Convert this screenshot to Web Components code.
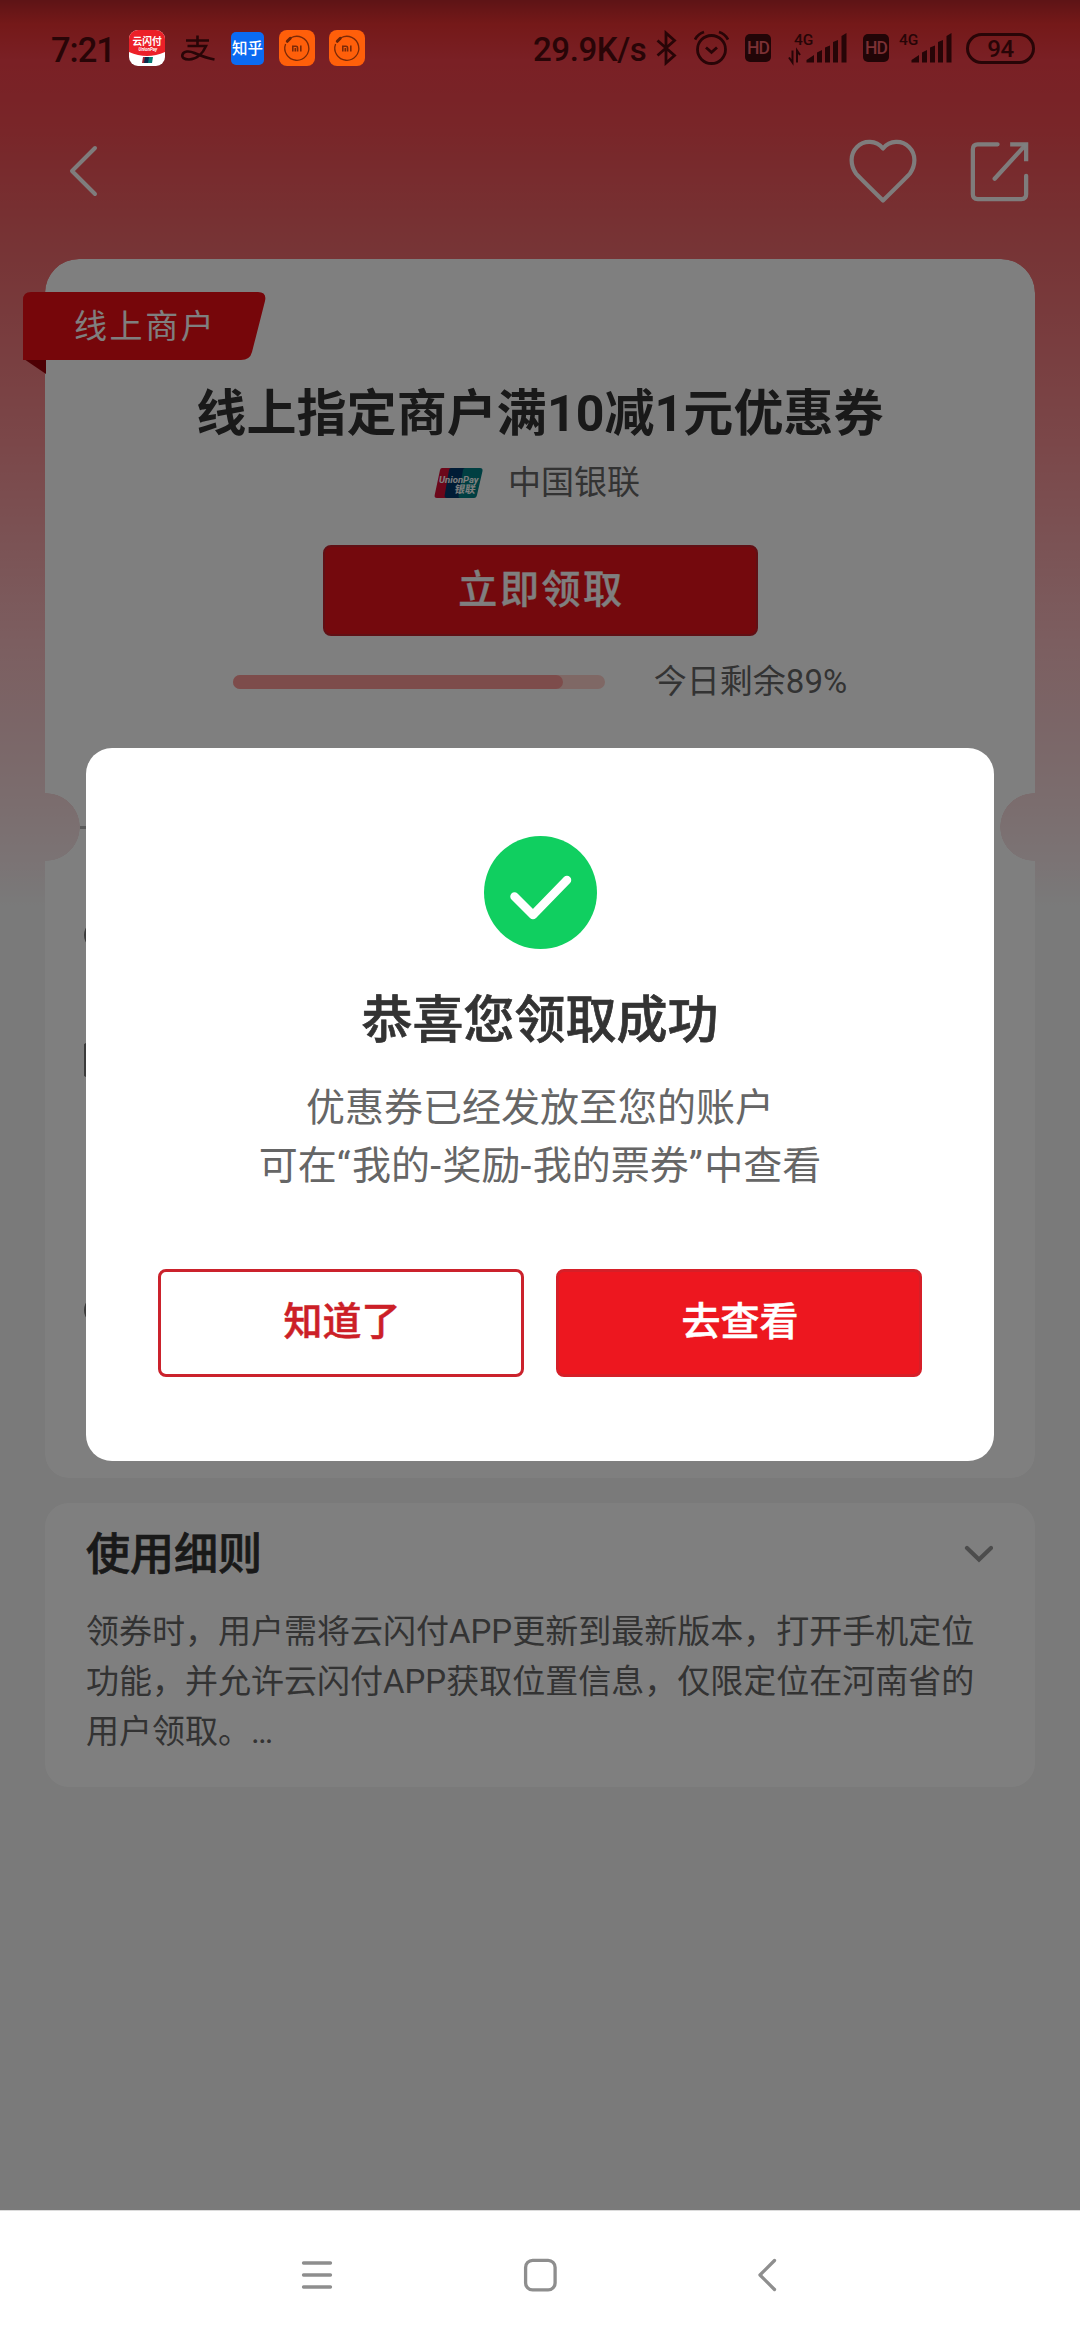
<!DOCTYPE html>
<html lang="zh-CN">
<head>
<meta charset="utf-8">
<title>优惠券</title>
<style>
html,body{margin:0;padding:0}
body{width:1080px;height:2340px;overflow:hidden;font-family:Roboto,"Noto Sans CJK SC",sans-serif;background:#fff}
</style>
</head>
<body>
<coupon-screen></coupon-screen>
<script>
function define(name, html){
  const t=document.createElement('template');
  t.innerHTML='<style>*{box-sizing:border-box}svg{display:block;flex:none}</style>'+html;
  customElements.define(name, class extends HTMLElement{
    constructor(){super();this.attachShadow({mode:'open'}).append(t.content.cloneNode(true));}
  });
}

define('mi-icon',`<style>:host{display:block;width:36px;height:36px}</style>
<svg width="36" height="36" viewBox="0 0 36 36"><rect width="36" height="36" rx="8" fill="#ff5f0a"/>
<path d="M12 7.8A12 12 0 1 1 6.6 14" fill="none" stroke="#7c2a08" stroke-width="1.3"/><path d="M8.300 11.300l3-3" stroke="#6b2408" stroke-width="3" stroke-linecap="round"/>
<path d="M13.800 21.500v-5.300h3.200q1.600 0 1.600 1.600v3.700M16.300 18v3.500M21.800 15.500v6" fill="none" stroke="#7c2a08" stroke-width="1.600"/></svg>`);

define('hd-badge',`<style>:host{display:flex;align-items:center;justify-content:center;width:26px;height:28px;border-radius:5px;background:#210507;color:#7c3034;font:500 17.500px/28px Roboto,sans-serif;letter-spacing:-1px}</style>HD`);

define('signal-meter',`<style>:host{display:block;width:60px;height:36px}svg{overflow:visible}</style>
<svg width="60" height="36" viewBox="0 0 60 36" fill="#260507">
<text x="6" y="14.500" font-family="Roboto" font-size="15.500" font-weight="500">4G</text>
<path d="M18.500 32.500v-2.500l7.500-5v7.500zM29 22.500l5-2.500v12.500h-5zM37 17.500l5-2v17h-5zM45 12l5-2v22.500h-5zM53.500 6l5-3v29.500h-5z"/>
<path class="a" d="M4.500 20.500v12L1 27.500M9 32.500v-12l3 4.500" fill="none" stroke="#260507" stroke-width="2"/></svg>`);

define('status-bar',`<style>:host{display:flex;align-items:center;height:96px;padding:0 45px 0 51px;color:#280507}
.time{font:500 34.500px/52px Roboto;letter-spacing:-1px;width:78px;white-space:nowrap;padding-top:3px}
.speed{font:500 33px/52px Roboto;letter-spacing:-.4px;width:123px;white-space:nowrap;margin-left:auto;padding-top:3px}
mi-icon+mi-icon{margin-left:14px}
.bt{margin-right:17px}.alarm{margin-right:16px}
.g1{margin:0 15px 0 17px}.g2{margin:0 13px 0 4px}
.bat{width:69px;height:31px;border:3px solid #280507;border-radius:16px;font:500 24px/26px Roboto;text-align:center;letter-spacing:-.5px}
</style>
<span class="time">7:21</span>
<svg width="36" height="36" viewBox="0 0 36 36"><defs><clipPath id="c"><rect width="36" height="36" rx="9"/></clipPath></defs><g clip-path="url(#c)"><rect width="36" height="36" fill="#fff"/><path d="M0 0h36v22q-18 8-36 0z" fill="#ec2028"/><text x="3.500" y="15" font-size="9.800" font-weight="700" fill="#fff" font-family="Noto Sans CJK SC">云闪付</text><text x="9.500" y="21" font-size="4.500" font-weight="700" font-style="italic" fill="#fff" font-family="Roboto">UnionPay</text><path d="M14 27h5l-1 6h-5z" fill="#a02333"/><path d="M16 27h5l-1 6h-5z" fill="#0b2b4d"/><path d="M20 27h4l-1 6h-4z" fill="#067a73"/></g></svg>
<svg style="margin:0 15px 0 15px" width="36" height="36" viewBox="0 0 36 36" fill="none" stroke="#280507" stroke-width="2.600"><path d="M6 10.500h23M17.500 5.500v10M7.500 16h18.500c-3 7-9 13.500-17 13.500-5 0-7.500-2-6.500-5 1.200-3.500 6.500-4 12-1.500 7 3 12 5 20 6.500"/></svg>
<svg width="33" height="33" viewBox="0 0 33 33"><rect width="33" height="33" rx="5" fill="#0b6bf2"/><text x="1" y="21.500" font-size="15.500" font-weight="500" fill="#fff" font-family="Noto Sans CJK SC">知乎</text></svg>
<mi-icon style="margin-left:15px"></mi-icon><mi-icon></mi-icon>
<span class="speed">29.9K/s</span>
<svg class="bt" width="21" height="36" viewBox="0 0 21 36" fill="none" stroke="#280507" stroke-width="2.800"><path d="M1.500 10.500l17 15L10 33V3l8.500 7.500-17 15"/></svg>
<svg class="alarm" width="35" height="36" viewBox="0 0 35 36" fill="none" stroke="#280507" stroke-width="2.800"><circle cx="17.500" cy="19.500" r="14"/><path d="M1 9.500Q4 4 10 2M34 9.500Q31 4 25 2M12 17.500l5.500 4.800 5.500-4.800"/></svg>
<hd-badge></hd-badge>
<signal-meter class="g1"></signal-meter>
<hd-badge></hd-badge>
<signal-meter class="g2" id="second"></signal-meter>
<div class="bat">94</div>`);

define('top-bar',`<style>:host{display:flex;align-items:center;height:150px;padding:0 50px 0 68px}.gap{flex:1}svg{fill:none;stroke:#fff;stroke-opacity:.96}</style>
<svg width="32" height="56" viewBox="0 0 32 56" stroke-width="4" stroke-linecap="round" stroke-linejoin="round"><path d="M27 5L4 28l23 23"/></svg><div class="gap"></div>
<svg width="68" height="64" viewBox="0 0 68 64" stroke-width="4.200" stroke-linejoin="round"><path d="M34 9.500C27 1 15 1 8 8S1 26 7 34.500Q9 37 34 61.500Q59 37 61 34.500C67 26 67 15 60 8S41 1 34 9.500z"/></svg>
<svg style="margin-left:52px" width="61" height="62" viewBox="0 0 62 64" stroke-width="4.400"><path d="M29 4.500H8.500q-5 0-5 5V56q0 5 5 5h45q5 0 5-5V37M26 40L57 6" stroke-linecap="round"/><path d="M42 4.500h16.500V22"/></svg>`);

define('shop-ribbon',`<style>:host{display:grid;width:243px;height:83px;margin-left:-22px}svg,span{grid-area:1/1}span{font-size:33px;line-height:70px;letter-spacing:2.600px;color:#fff;padding-left:51px;z-index:1}</style>
<svg width="243" height="83" viewBox="0 0 243 83"><path d="M1 67h22v15z" fill="#9c0008"/><path d="M0 68V8q0-8 8-8h227q9 0 7 9l-13 51q-2 8-11 8z" fill="#ec0d15"/></svg><span><slot></slot></span>`);

define('union-logo',`<style>:host{display:block}</style>
<svg width="49" height="30" viewBox="0 0 49 30"><path d="M8 0h12l-6 30H3q-3 0-2.300-3L6 2q.5-2 2-2z" fill="#d80f35"/><path d="M17 0h17l-6 30H13q-3 0-2.300-3L15 2q.5-2 2-2z" fill="#00386c"/><path d="M31 0h15q3 0 2.500 3l-5.500 24q-.6 3-3 3H26q-2 0-1.300-3L29 2q.5-2 2-2z" fill="#007e84"/>
<text x="5" y="14.500" font-family="Roboto" font-size="9.500" font-weight="700" font-style="italic" fill="#fff">UnionPay</text><text transform="translate(20 25) skewX(-10)" font-family="Noto Sans CJK SC" font-size="10.500" font-weight="700" fill="#fff">银联</text></svg>`);

define('coupon-card',`<style>:host{display:block;width:990px;height:1219px;margin:13px 0 0 45px;border-radius:34px 34px 24px 24px;background:#fff;
mask:radial-gradient(circle 34px at 1px 568px,#0000 33.500px,#000 34px) 0 0/50% 100% no-repeat,radial-gradient(circle 34px at 494px 568px,#0000 33.500px,#000 34px) 100% 0/50% 100% no-repeat}
</style>`);

define('coupon-head',`<style>:host{display:flex;flex-direction:column;align-items:center}
h1{margin:0;font-size:50px;line-height:66px;font-weight:700;color:#333;white-space:nowrap;letter-spacing:.08px}
.brand{display:flex;align-items:center;gap:25px;font-size:33px;line-height:44px;color:#666;margin-top:14px;padding-right:6px}
.btn{width:435px;height:91px;margin-top:40px;border-radius:8px;background:#e9131b;border:2.500px solid #c0202b;color:#fff;font-size:39px;line-height:86px;font-weight:500;text-align:center;letter-spacing:2.600px;padding-left:3px;-webkit-text-stroke:.4px}
.row{display:flex;align-items:center;gap:49px;margin-top:24px;font-size:33px;line-height:44px;color:#666}
.track{width:372px;height:14px;border-radius:7px;background:#ffd0cb}.fill{width:330px;height:14px;border-radius:7px;background:#fa9996}
</style>
<h1>线上指定商户满10减1元优惠券</h1>
<div class="brand"><union-logo></union-logo><span>中国银联</span></div>
<div class="btn">立即领取</div>
<div class="row"><div class="track"><div class="fill"></div></div><span>今日剩余89%</span></div>`);

define('coupon-facts',`<style>:host{display:flex;flex-direction:column;padding:0 38px 0 35px}
.dash{height:3px;margin-top:122px;background:repeating-linear-gradient(90deg,#b5b5b5 0 10px,#0000 10px 17px)}
svg{fill:none;stroke:#777;stroke-width:3}</style>
<div class="dash"></div>
<svg style="margin:91px 0 0 4px" width="30" height="30" viewBox="0 0 30 30"><circle cx="15" cy="15" r="13.500"/></svg>
<svg style="margin:93px 0 0 4px" width="34" height="34" viewBox="0 0 34 34"><rect x="1" y="1.500" width="31" height="31" rx="2"/></svg>
<svg style="margin:218px 0 0 4px" width="30" height="30" viewBox="0 0 30 30"><circle cx="15" cy="15" r="13.500"/></svg>`);

define('rules-card',`<style>:host{display:block;width:990px;height:284px;margin:25px 0 0 45px;border-radius:24px;background:#fff;padding:21px 42px 0 41px}
header{display:flex;align-items:center;justify-content:space-between}
h2{margin:0;font-size:44px;line-height:62px;font-weight:500;color:#333;-webkit-text-stroke:.7px #333}
p{margin:21px 0 0;font-size:33px;line-height:50px;color:#666;white-space:nowrap}</style>
<header><h2>使用细则</h2><svg width="32" height="24" viewBox="0 0 32 24" fill="none" stroke="#999" stroke-width="4.200" stroke-linecap="round"><path d="M6 5L18 16.500 30 5"/></svg></header>
<p>领券时，用户需将云闪付APP更新到最新版本，打开手机定位<br>功能，并允许云闪付APP获取位置信息，仅限定位在河南省的<br>用户领取。…</p>`);

define('success-dialog',`<style>:host{position:absolute;left:86px;top:748px;width:908px;height:713px;border-radius:26px;background:#fff;display:flex;flex-direction:column;align-items:center;padding:88px 72px 0}
h3{margin:36px 0 0;font-size:51px;line-height:72px;font-weight:500;color:#333;-webkit-text-stroke:.7px #333}
p{margin:22px 0 0;font-size:39px;line-height:58px;color:#666;text-align:center;white-space:nowrap}
i{font-style:normal;letter-spacing:1.500px}
.row{display:flex;gap:32px;width:764px;margin-top:74px}
.b{flex:1;height:108px;border:3px solid #cb222c;border-radius:8px;text-align:center;font-size:39px;line-height:101px;font-weight:500;color:#cc1f27;-webkit-text-stroke:.5px;padding-left:2px}
.p{background:#ed171f;color:#fff;border-color:#d61f28}</style>
<svg width="113" height="113" viewBox="0 0 113 113"><circle cx="56.500" cy="56.500" r="56.500" fill="#10cf60"/><path d="M30.500 60.500L49 79 83 44" fill="none" stroke="#fff" stroke-width="8.500" stroke-linecap="round" stroke-linejoin="round"/></svg>
<h3>恭喜您领取成功</h3>
<p>优惠券已经发放至您的账户<br>可在<i>“</i>我的<i>-</i>奖励<i>-</i>我的票券<i>”</i>中查看</p>
<div class="row"><div class="b">知道了</div><div class="b p">去查看</div></div>`);

define('nav-bar',`<style>:host{display:flex;align-items:center;width:1080px;height:130px;background:#fff;border-top:1px solid #dcdcdc;padding:0 0 2px 300px}svg{fill:none;stroke:#8e8e8e;stroke-width:3.300;stroke-linecap:round;stroke-linejoin:round}</style>
<svg width="34" height="34" viewBox="0 0 34 34"><path d="M3.500 5h27M3.500 17h27M3.500 29h27"/></svg>
<svg style="margin:0 200px 0 189px" width="34" height="34" viewBox="0 0 34 34"><rect x="2.600" y="2.400" width="29.500" height="29.500" rx="7"/></svg>
<svg width="20" height="34" viewBox="0 0 20 34"><path d="M17.500 2.500L3 17l14.500 14.500"/></svg>`);

define('coupon-screen',`<style>:host{display:flex;flex-direction:column;position:relative;width:1080px;height:2340px}
.page{isolation:isolate;height:2210px;background:linear-gradient(#bc282c 0,#ea3232 24px,#f4404a 60px,#f24c52 130px,#ee6669 235px,#f68e92 440px,#f8bcc0 640px,#f6dadc 800px,#f6e8ea 865px,#f4f4f4 905px)}
.scrim{position:absolute;left:0;top:0;width:1080px;height:2210px;background:rgba(0,0,0,.5)}
status-bar{position:absolute;left:0;top:0;width:1080px}
top-bar{margin-top:96px}
.wrap{display:grid}.wrap>*{grid-area:1/1}
.body{z-index:1;padding:46px 0 0 45px;width:1035px;height:1232px}
shop-ribbon{margin-bottom:6px}</style>
<div class="page"><top-bar></top-bar>
<div class="wrap"><coupon-card></coupon-card>
<div class="body"><shop-ribbon>线上商户</shop-ribbon><coupon-head></coupon-head><coupon-facts></coupon-facts></div></div>
<rules-card></rules-card></div>
<nav-bar></nav-bar>
<div class="scrim"></div>
<status-bar></status-bar>
<success-dialog></success-dialog>`);

// The second SIM shows no data arrows.
const bar=document.querySelector('coupon-screen').shadowRoot.querySelector('status-bar');
bar.shadowRoot.querySelector('#second').shadowRoot.querySelector('.a').remove();
</script>
</body>
</html>
